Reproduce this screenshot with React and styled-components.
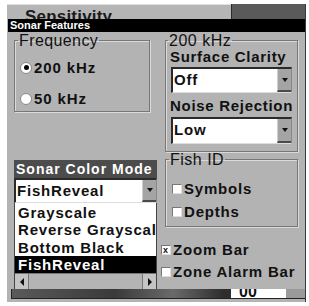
import styled, { createGlobalStyle } from 'styled-components';

const GlobalStyle = createGlobalStyle`
  body {
    margin: 0;
    background: #ffffff;
    font-family: 'Liberation Sans', Arial, sans-serif;
  }
`;

const Screen = styled.div`
  margin: 4px 0 0 7px;
  width: 298px;
  height: 298px;
  display: flex;
  flex-direction: column;
  background: #b3b3b3;
  border-right: 1px solid #3a3a3a;
  overflow: hidden;
`;

const TopBar = styled.div`
  height: 15px;
  display: flex;
  flex-shrink: 0;
`;

const TopBarTab = styled.div`
  width: 224px;
  background: #b5b5b5;
  overflow: hidden;
  color: #1a1a1a;
  font-weight: bold;
  font-size: 17px;
  line-height: 24px;
  padding-left: 18px;
  letter-spacing: 0.2px;
  box-sizing: border-box;
  border-top: 1px solid #e0e0e0;
`;

const TopBarFill = styled.div`
  flex: 1;
  background: #5a5a5a;
  border-left: 1px solid #2a2a2a;
`;

const Dialog = styled.div`
  flex: 1;
  margin-left: 1px;
  display: flex;
  flex-direction: column;
  background: #b3b3b3;
`;

const TitleBar = styled.div`
  height: 13px;
  background: #000;
  color: #fff;
  font-weight: bold;
  font-size: 11px;
  line-height: 13px;
  padding-left: 2px;
`;

const Body = styled.div`
  display: grid;
  grid-template-columns: 143px 138px;
  column-gap: 4px;
  padding: 1px 0 0 6px;
  height: 257px;
  box-sizing: border-box;
`;

const Column = styled.div`
  display: flex;
  flex-direction: column;
`;

const Group = styled.fieldset`
  margin: 0 0 0 ${(p) => p.$indent || 0}px;
  width: ${(p) => p.$width}px;
  height: ${(p) => p.$height}px;
  box-sizing: border-box;
  padding: 0 0 0 ${(p) => p.$pad || 6}px;
  border: 1px solid #777;
  box-shadow: inset 1px 1px 0 #dadada, 1px 1px 0 #dadada;
  display: flex;
  flex-direction: column;
`;

const Legend = styled.legend`
  padding: 0 1px;
  margin-left: -3px;
  font-size: ${(p) => p.$size || 15}px;
  letter-spacing: ${(p) => p.$spacing || 0.6}px;
  color: #111;
  line-height: 15px;
`;

const RadioRow = styled.div`
  display: flex;
  align-items: center;
  gap: 2px;
  margin-top: ${(p) => p.$top}px;
  margin-left: -1px;
  font-weight: bold;
  font-size: 15px;
  letter-spacing: 0.9px;
  color: #111;
`;

const Radio = styled.span`
  width: 10px;
  height: 10px;
  border-radius: 50%;
  background: #fff;
  border: 1px solid #888;
  display: flex;
  align-items: center;
  justify-content: center;

  &::after {
    content: '';
    width: 5px;
    height: 5px;
    border-radius: 50%;
    background: ${(p) => (p.$on ? '#000' : 'transparent')};
  }
`;

const ModeHeader = styled.div`
  margin-top: ${(p) => p.$top}px;
  width: 143px;
  height: 18px;
  background: #4c4c4c;
  color: #fff;
  font-weight: bold;
  font-size: 14px;
  line-height: 18px;
  letter-spacing: 1px;
  padding-left: 2px;
  box-sizing: border-box;
  white-space: nowrap;
`;

const Select = styled.div`
  display: flex;
  width: ${(p) => p.$width}px;
  height: ${(p) => p.$height}px;
  margin-top: ${(p) => p.$top || 0}px;
  background: #fff;
  border-top: 2px solid #2a2a2a;
  border-left: 2px solid #2a2a2a;
  border-right: 1px solid #888;
  border-bottom: 1px solid #ddd;
  box-sizing: border-box;
`;

const SelectValue = styled.div`
  flex: 1;
  font-weight: bold;
  font-size: 15px;
  letter-spacing: 0.8px;
  line-height: 22px;
  color: #111;
  padding-left: 1px;
`;

const ArrowButton = styled.div`
  width: 14px;
  background: #a4a4a4;
  border-left: 1px solid #cfcfcf;
  border-bottom: 2px solid #4a4a4a;
  box-sizing: border-box;
  display: flex;
  align-items: center;
  justify-content: center;

  &::after {
    content: '';
    border-left: 3px solid transparent;
    border-right: 3px solid transparent;
    border-top: 4px solid #111;
  }
`;

const List = styled.div`
  width: 143px;
  height: 88px;
  background: #fff;
  border: 1px solid #444;
  border-top: none;
  box-sizing: border-box;
  display: flex;
  flex-direction: column;
  padding-top: 1px;
`;

const ListItem = styled.div`
  height: 17.5px;
  line-height: 17px;
  font-weight: bold;
  font-size: 15px;
  letter-spacing: 0.8px;
  padding-left: 3px;
  white-space: nowrap;
  overflow: hidden;
  color: ${(p) => (p.$active ? '#fff' : '#111')};
  background: ${(p) => (p.$active ? '#000' : 'transparent')};
`;

const ScrollBar = styled.div`
  margin-top: auto;
  height: 16px;
  display: flex;
  background: #b0b0b0;
  border-top: 1px solid #777;
`;

const ScrollArrow = styled.div`
  width: 13px;
  background: #c4c4c4;
  border-right: ${(p) => (p.$left ? '1px solid #777' : 'none')};
  border-left: ${(p) => (p.$left ? 'none' : '1px solid #777')};
  display: flex;
  align-items: center;
  justify-content: center;

  &::after {
    content: '';
    border-top: 4px solid transparent;
    border-bottom: 4px solid transparent;
    ${(p) => (p.$left ? 'border-right: 4px solid #111;' : 'border-left: 4px solid #111;')}
  }
`;

const ScrollTrack = styled.div`
  flex: 1;
  background: #b4b4b4;
`;

const FieldLabel = styled.div`
  margin-top: ${(p) => p.$top}px;
  margin-left: -1px;
  font-weight: bold;
  font-size: 15px;
  letter-spacing: 0.7px;
  line-height: 16px;
  color: #111;
  white-space: nowrap;
`;

const CheckRow = styled.div`
  display: flex;
  align-items: center;
  gap: 2px;
  margin-top: ${(p) => p.$top}px;
  margin-left: ${(p) => p.$left || 0}px;
  font-weight: bold;
  font-size: 15px;
  letter-spacing: 0.8px;
  line-height: 16px;
  color: #111;
  white-space: nowrap;
`;

const Check = styled.span`
  width: 10px;
  height: 10px;
  box-sizing: border-box;
  background: #fff;
  border-top: 1px solid #777;
  border-left: 1px solid #777;
  border-right: 1px solid #ddd;
  border-bottom: 1px solid #ddd;
  font-size: 9px;
  line-height: 8px;
  text-align: center;
  font-weight: bold;
  color: #111;
`;

const BottomStrip = styled.div`
  height: 9px;
  margin: 0 0 0 3px;
  display: flex;
  border-left: 1px solid #222;
  border-bottom: 1px solid #222;
  background: linear-gradient(90deg, #5a5a5a 0%, #3a3a3a 35%, #6a6a6a 55%, #2e2e2e 72%);
`;

const StripGap = styled.div`
  flex: 1;
`;

const StripReadout = styled.div`
  width: 55px;
  background: #fff;
  color: #111;
  font-weight: bold;
  font-size: 16px;
  line-height: 6px;
  padding-left: 8px;
  box-sizing: border-box;
  overflow: hidden;
`;

const StripEnd = styled.div`
  width: 19px;
  background: #9a9a9a;
`;

export default function App() {
  return (
    <>
      <GlobalStyle />
      <Screen>
        <TopBar>
          <TopBarTab>Sensitivity</TopBarTab>
          <TopBarFill />
        </TopBar>
        <Dialog>
          <TitleBar>Sonar Features</TitleBar>
          <Body>
            <Column>
              <Group $width={136} $height={79}>
                <Legend $size={16} $spacing={0.4}>Frequency</Legend>
                <RadioRow $top={11}>
                  <Radio $on />
                  200 kHz
                </RadioRow>
                <RadioRow $top={14}>
                  <Radio />
                  50 kHz
                </RadioRow>
              </Group>
              <ModeHeader $top={48}>Sonar Color Mode</ModeHeader>
              <Select $width={143} $height={25}>
                <SelectValue>FishReveal</SelectValue>
                <ArrowButton />
              </Select>
              <List>
                <ListItem>Grayscale</ListItem>
                <ListItem>Reverse Grayscale</ListItem>
                <ListItem>Bottom Black</ListItem>
                <ListItem $active>FishReveal</ListItem>
                <ScrollBar>
                  <ScrollArrow $left />
                  <ScrollTrack />
                  <ScrollArrow />
                </ScrollBar>
              </List>
            </Column>
            <Column>
              <Group $indent={4} $width={133} $height={119} $pad={5}>
                <Legend $size={16} $spacing={0.5}>200 kHz</Legend>
                <FieldLabel $top={1}>Surface Clarity</FieldLabel>
                <Select $width={121} $height={26} $top={2}>
                  <SelectValue>Off</SelectValue>
                  <ArrowButton />
                </Select>
                <FieldLabel $top={5}>Noise Rejection</FieldLabel>
                <Select $width={121} $height={27} $top={3}>
                  <SelectValue>Low</SelectValue>
                  <ArrowButton />
                </Select>
              </Group>
              <Group $indent={4} $width={133} $height={75} $pad={6}>
                <Legend $size={16} $spacing={0.5}>Fish ID</Legend>
                <CheckRow $top={14}>
                  <Check />
                  Symbols
                </CheckRow>
                <CheckRow $top={7}>
                  <Check />
                  Depths
                </CheckRow>
              </Group>
              <CheckRow $top={15}>
                <Check>x</Check>
                Zoom Bar
              </CheckRow>
              <CheckRow $top={6}>
                <Check />
                Zone Alarm Bar
              </CheckRow>
            </Column>
          </Body>
          <BottomStrip>
            <StripGap />
            <StripReadout>00</StripReadout>
            <StripEnd />
          </BottomStrip>
        </Dialog>
      </Screen>
    </>
  );
}
